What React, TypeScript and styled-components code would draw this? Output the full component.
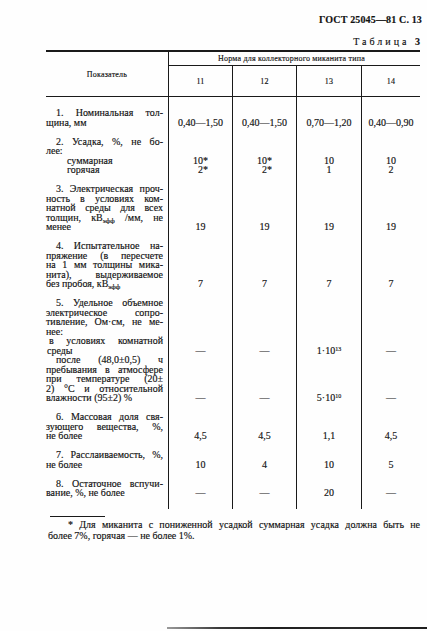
import React from "react";
import styled, { createGlobalStyle } from "styled-components";

const Global = createGlobalStyle`
  html, body { margin: 0; padding: 0; background: #fefefe; }
  body {
    font-family: "Liberation Serif", "Times New Roman", serif;
    color: #111111;
    -webkit-text-stroke: 0.15px #111111;
  }
`;

const INK = "#1a1a1a";

const Page = styled.div`
  width: 427px;
  height: 631px;
  box-sizing: border-box;
  padding: 14px 7px 0 46px;
  overflow: hidden;
  background: #fefefe;
  display: flex;
  flex-direction: column;
`;

const RunningHead = styled.div`
  align-self: flex-end;
  margin-right: -2px;
  font-weight: 700;
  font-size: 10px;
  line-height: 12px;
  letter-spacing: 0.15px;
`;

const Caption = styled.div`
  align-self: flex-end;
  margin-top: 10px;
  font-size: 10px;
  line-height: 12px;
  letter-spacing: 3px;
`;

const CaptionNum = styled.b`
  letter-spacing: 0;
`;

const Table = styled.div`
  margin-top: 2px;
  display: flex;
  flex-direction: column;
`;

const COLS = "122px 64px 64px 65px 59px";

const HeadGrid = styled.div`
  display: grid;
  grid-template-columns: ${COLS};
  grid-template-rows: 14px 30px;
  border-top: 2px solid ${INK};
  border-bottom: 1px solid ${INK};
  font-size: 8px;
  letter-spacing: 0.2px;
`;

const HeadLabel = styled.div`
  grid-row: 1 / 3;
  display: flex;
  align-items: center;
  justify-content: center;
  padding-top: 1px;
`;

const HeadSpan = styled.div`
  grid-column: 2 / 6;
  box-sizing: border-box;
  border-left: 1px solid ${INK};
  border-bottom: 1px solid ${INK};
  display: flex;
  align-items: center;
  justify-content: center;
  padding-right: 6px;
`;

const HeadNum = styled.div`
  border-left: 1px solid ${INK};
  display: flex;
  align-items: center;
  justify-content: center;
`;

const BodyGrid = styled.div`
  display: grid;
  grid-template-columns: ${COLS};
  font-size: 10px;
  line-height: 9.5px;
`;

const LabelCell = styled.div<{ $pt: number; $pb: number }>`
  padding: ${(p) => p.$pt}px 5px ${(p) => p.$pb}px 0;
`;

const Line = styled.span<{ $j?: boolean; $i?: number }>`
  display: block;
  padding-left: ${(p) => p.$i ?? 0}px;
  text-align: ${(p) => (p.$j ? "justify" : "left")};
  text-align-last: ${(p) => (p.$j ? "justify" : "left")};
`;

const ValueCell = styled.div<{ $pb: number }>`
  border-left: 1px solid ${INK};
  display: flex;
  flex-direction: column;
  justify-content: flex-end;
  align-items: center;
  padding-bottom: ${(p) => p.$pb}px;
`;

const Stack = styled.span<{ $right?: boolean }>`
  display: inline-block;
  text-align: ${(p) => (p.$right ? "right" : "center")};
`;

const Sup = styled.sup`
  font-size: 6px;
  line-height: 0;
  vertical-align: 3px;
`;

const Sub = styled.sub`
  font-size: 7px;
  line-height: 0;
  vertical-align: -2px;
`;

const Rule = styled.div`
  margin-top: 7px;
  margin-left: 4px;
  width: 55px;
  height: 1px;
  background: ${INK};
`;

const Footnote = styled.div`
  margin-top: 2px;
  margin-left: 2px;
  font-size: 10px;
  line-height: 11px;
`;

const ScanEdge = styled.div`
  margin-top: auto;
  margin-bottom: 2px;
  margin-left: 121px;
  margin-right: -7px;
  height: 2px;
  background: linear-gradient(
    90deg,
    #9a9a9a 0%,
    #3a3a3a 20%,
    #1e1e1e 40%,
    #2a2a2a 70%,
    #1e1e1e 100%
  );
`;

type L = { t: React.ReactNode; j?: boolean; i?: number };
type Row = {
  lines: L[];
  vals: React.ReactNode[];
  pt: number;
  pb?: number;
};

const kv = (
  <>
    кВ<Sub>эфф</Sub>
  </>
);

const two = (a: string, b: string, right?: boolean) => (
  <Stack $right={right}>
    {a}
    <br />
    {b}
  </Stack>
);

const rows: Row[] = [
  {
    pt: 11,
    lines: [
      { t: "1. Номинальная тол-", j: true, i: 10 },
      { t: "щина, мм" },
    ],
    vals: ["0,40—1,50", "0,40—1,50", "0,70—1,20", "0,40—0,90"],
  },
  {
    pt: 9.5,
    lines: [
      { t: "2. Усадка, %, не бо-", j: true, i: 10 },
      { t: "лее:" },
      { t: "суммарная", i: 21 },
      { t: "горячая", i: 21 },
    ],
    vals: [
      two("10*", "2*", true),
      two("10*", "2*", true),
      two("10", "1"),
      two("10", "2"),
    ],
  },
  {
    pt: 9.5,
    lines: [
      { t: "3. Электрическая проч-", j: true, i: 10 },
      { t: "ность в условиях ком-", j: true },
      { t: "натной среды для всех", j: true },
      {
        t: (
          <>
            толщин, {kv} /мм, не
          </>
        ),
        j: true,
      },
      { t: "менее" },
    ],
    vals: ["19", "19", "19", "19"],
  },
  {
    pt: 9.5,
    lines: [
      { t: "4. Испытательное на-", j: true, i: 10 },
      { t: "пряжение (в пересчете", j: true },
      { t: "на 1 мм толщины мика-", j: true },
      { t: "нита), выдерживаемое", j: true },
      {
        t: (
          <>
            без пробоя, {kv}
          </>
        ),
      },
    ],
    vals: ["7", "7", "7", "7"],
  },
  {
    pt: 9.5,
    lines: [
      { t: "5. Удельное объемное", j: true, i: 10 },
      { t: "электрическое сопро-", j: true },
      { t: "тивление, Ом·см, не ме-", j: true },
      { t: "нее:" },
      { t: "в условиях комнатной", j: true, i: 3 },
      { t: "среды", i: 1 },
    ],
    vals: [
      "—",
      "—",
      <>
        1·10<Sup>13</Sup>
      </>,
      "—",
    ],
  },
  {
    pt: 0,
    lines: [
      { t: "после (48,0±0,5) ч", j: true, i: 10 },
      { t: "пребывания в атмосфере", j: true },
      { t: "при температуре (20±", j: true },
      { t: "2) °С и относительной", j: true },
      { t: "влажности (95±2) %" },
    ],
    vals: [
      "—",
      "—",
      <>
        5·10<Sup>10</Sup>
      </>,
      "—",
    ],
  },
  {
    pt: 9.5,
    lines: [
      { t: "6. Массовая доля свя-", j: true, i: 10 },
      { t: "зующего вещества, %,", j: true },
      { t: "не более" },
    ],
    vals: ["4,5", "4,5", "1,1", "4,5"],
  },
  {
    pt: 9.5,
    lines: [
      { t: "7. Расслаиваемость, %,", j: true, i: 10 },
      { t: "не более" },
    ],
    vals: ["10", "4", "10", "5"],
  },
  {
    pt: 9.5,
    pb: 11,
    lines: [
      { t: "8. Остаточное вспучи-", j: true, i: 10 },
      { t: "вание, %, не более" },
    ],
    vals: ["—", "—", "20", "—"],
  },
];

export default function App() {
  return (
    <>
      <Global />
      <Page>
        <RunningHead>ГОСТ 25045—81 С. 13</RunningHead>
        <Caption>
          Таблица <CaptionNum>3</CaptionNum>
        </Caption>
        <Table>
          <HeadGrid>
            <HeadLabel>Показатель</HeadLabel>
            <HeadSpan>Норма для коллекторного миканита типа</HeadSpan>
            <HeadNum>11</HeadNum>
            <HeadNum>12</HeadNum>
            <HeadNum>13</HeadNum>
            <HeadNum>14</HeadNum>
          </HeadGrid>
          <BodyGrid>
            {rows.map((r, ri) => (
              <React.Fragment key={ri}>
                <LabelCell $pt={r.pt} $pb={r.pb ?? 0}>
                  {r.lines.map((l, li) => (
                    <Line key={li} $j={l.j} $i={l.i}>
                      {l.t}
                    </Line>
                  ))}
                </LabelCell>
                {r.vals.map((v, vi) => (
                  <ValueCell key={vi} $pb={r.pb ?? 0}>
                    <span>{v}</span>
                  </ValueCell>
                ))}
              </React.Fragment>
            ))}
          </BodyGrid>
        </Table>
        <Rule />
        <Footnote>
          <Line $j $i={20}>
            * Для миканита с пониженной усадкой суммарная усадка должна быть не
          </Line>
          <Line>более 7%, горячая — не более 1%.</Line>
        </Footnote>
        <ScanEdge />
      </Page>
    </>
  );
}
